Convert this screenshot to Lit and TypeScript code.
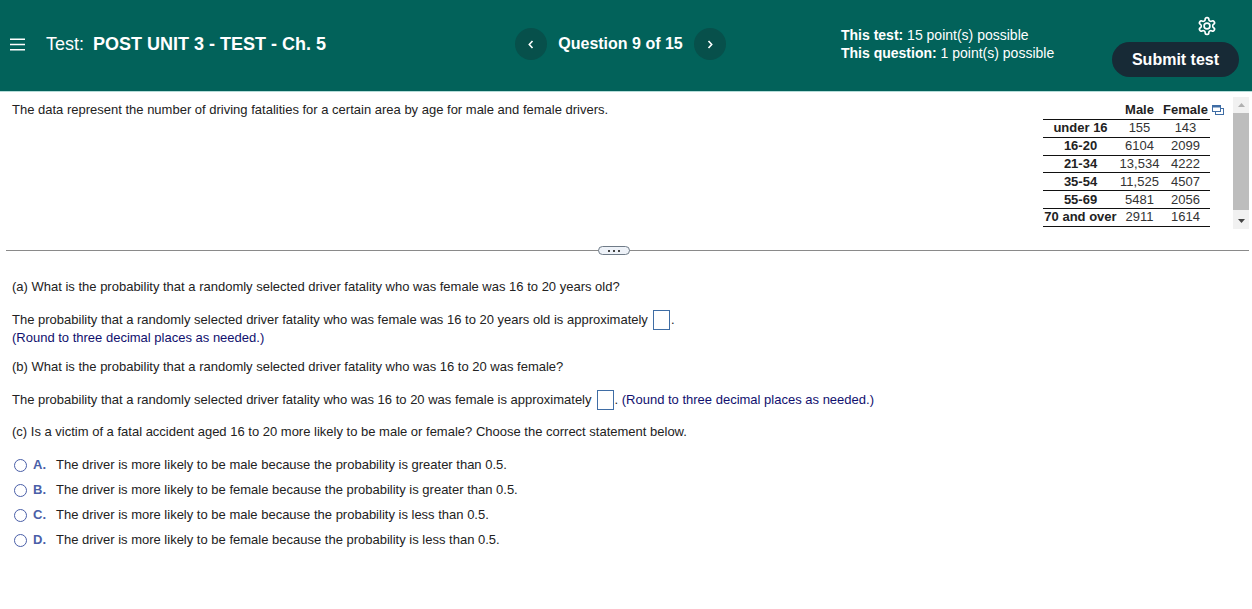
import { LitElement, html, css } from 'lit';
import { customElement } from 'lit/decorators.js';

const ROWS = [
  ['under 16', '155', '143'],
  ['16-20', '6104', '2099'],
  ['21-34', '13,534', '4222'],
  ['35-54', '11,525', '4507'],
  ['55-69', '5481', '2056'],
  ['70 and over', '2911', '1614'],
];

const OPTIONS = [
  ['A.', 'The driver is more likely to be male because the probability is greater than 0.5.'],
  ['B.', 'The driver is more likely to be female because the probability is greater than 0.5.'],
  ['C.', 'The driver is more likely to be male because the probability is less than 0.5.'],
  ['D.', 'The driver is more likely to be female because the probability is less than 0.5.'],
];

@customElement('app-root')
export class AppRoot extends LitElement {
  static styles = css`
    :host {
      display: block;
      height: 609px;
      overflow: hidden;
      background: #fff;
      font-family: 'Liberation Sans', Arial, sans-serif;
      font-size: 13px;
      color: #222;
    }

    /* header */
    .header {
      height: 92px;
      box-sizing: border-box;
      background: #02625a;
      border-bottom: 1px solid #b5dcd8;
      color: #fff;
      display: grid;
      grid-template-columns: 515px 326px 271px 1fr;
      align-items: center;
    }
    .title {
      display: flex;
      align-items: center;
      padding-left: 10px;
      margin-top: -3px;
      font-size: 18px;
    }
    .menu {
      width: 15px;
      height: 13px;
      margin-right: 21px;
      flex: none;
    }
    .title b {
      margin-left: 9px;
    }
    .nav {
      display: flex;
      align-items: center;
      margin-top: -3px;
      font-size: 16px;
      font-weight: bold;
    }
    .nav span {
      width: 125px;
      margin: 0 11px;
      text-align: center;
      white-space: nowrap;
    }
    .round {
      width: 32px;
      height: 32px;
      border-radius: 50%;
      background: #07504b;
      display: flex;
      align-items: center;
      justify-content: center;
    }
    .points {
      font-size: 14px;
      line-height: 18px;
      margin-top: -4px;
    }
    .actions {
      display: flex;
      flex-direction: column;
      align-items: flex-end;
      padding-right: 13px;
      margin-top: 2px;
    }
    .gear {
      width: 20px;
      height: 20px;
      margin: 0 22px 6px 0;
    }
    .submit {
      width: 127px;
      height: 35px;
      border: none;
      border-radius: 18px;
      background: #172a36;
      color: #fff;
      font: bold 16px 'Liberation Sans', Arial, sans-serif;
    }

    /* top pane */
    .top {
      height: 158px;
      box-sizing: border-box;
      display: flex;
      padding: 6px 3px 0 12px;
    }
    .intro {
      flex: 1;
      margin: 5px 0 0;
      line-height: 14px;
    }
    .data {
      display: flex;
      align-items: flex-start;
      margin: 4px 0 0;
    }
    table {
      width: 167px;
      table-layout: fixed;
      border-collapse: collapse;
      font-size: 13px;
      line-height: 14px;
    }
    th,
    td {
      height: 16.8px;
      padding: 0;
      text-align: center;
      white-space: nowrap;
    }
    td {
      color: #333;
    }
    thead th {
      height: 15px;
      padding-bottom: 2px;
      vertical-align: bottom;
      font-weight: bold;
    }
    tbody tr {
      border-top: 1px solid #111;
    }
    tbody tr:last-child {
      border-bottom: 1px solid #111;
    }
    tbody th {
      font-weight: bold;
    }
    .col-age {
      width: 75px;
    }
    .col-male {
      width: 43px;
    }
    .copy {
      width: 12px;
      height: 10px;
      margin: 3px 9px 0 2px;
      flex: none;
    }
    .scroll {
      width: 16px;
      height: 132px;
      margin-top: -5px;
      background: #f1f1f1;
      display: flex;
      flex-direction: column;
      align-items: center;
      flex: none;
    }
    .thumb {
      width: 100%;
      height: 97px;
      background: #bdbdbd;
    }
    .arrow {
      width: 7px;
      height: 4px;
      margin: 6px 0;
    }
    .arrow.down {
      margin-top: auto;
    }

    /* divider */
    .divider {
      height: 1px;
      margin: 0 3px 0 6px;
      background: #8a8a8a;
      position: relative;
    }
    .grip {
      position: absolute;
      left: 592px;
      top: -4px;
      width: 30px;
      height: 7px;
      border: 1px solid #6f7b87;
      border-radius: 5px;
      background: #eef2f8;
      display: flex;
      align-items: center;
      justify-content: center;
      gap: 3px;
    }
    .grip i {
      width: 2px;
      height: 2px;
      background: #444;
    }

    /* questions */
    .body {
      padding: 29px 12px 0;
      line-height: 14px;
    }
    .body p {
      margin: 0;
    }
    .hint {
      color: #10106e;
    }
    .answer-line {
      display: flex;
      align-items: center;
      height: 18px;
      white-space: pre;
    }
    .box {
      width: 17px;
      height: 20px;
      border: 1px solid #3f6da5;
      margin: 0 1px 0 5px;
      box-sizing: border-box;
    }
    .options {
      margin-top: 19px;
      display: flex;
      flex-direction: column;
      gap: 11px;
    }
    .option {
      display: flex;
      align-items: center;
      height: 14px;
      padding-left: 2px;
    }
    .radio {
      width: 13px;
      height: 13px;
      box-sizing: border-box;
      border: 1.3px solid #4a5fa8;
      border-radius: 50%;
      margin-right: 6px;
    }
    .letter {
      width: 23px;
      font-weight: bold;
      color: #4a5fa8;
    }
  `;

  render() {
    return html`
      <div class="header">
        <div class="title">
          <svg class="menu" viewBox="0 0 15 13" fill="none" stroke="#fff" stroke-width="1.4">
            <path d="M0 1.2h15M0 6.5h15M0 11.8h15" />
          </svg>
          Test: <b>POST UNIT 3 - TEST - Ch. 5</b>
        </div>
        <div class="nav">
          <div class="round">
            <svg width="6" height="9" viewBox="0 0 6 9" fill="none" stroke="#fff" stroke-width="1.6">
              <path d="M4.5 1 1.3 4.5l3.2 3.5" />
            </svg>
          </div>
          <span>Question 9 of 15</span>
          <div class="round">
            <svg width="6" height="9" viewBox="0 0 6 9" fill="none" stroke="#fff" stroke-width="1.6">
              <path d="M1.5 1l3.2 3.5L1.5 8" />
            </svg>
          </div>
        </div>
        <div class="points">
          <div><b>This test:</b> 15 point(s) possible</div>
          <div><b>This question:</b> 1 point(s) possible</div>
        </div>
        <div class="actions">
          <svg class="gear" viewBox="0 0 24 24" fill="none" stroke="#fff" stroke-width="2" stroke-linecap="round" stroke-linejoin="round">
            <path d="M12.22 2h-.44a2 2 0 0 0-2 2v.18a2 2 0 0 1-1 1.73l-.43.25a2 2 0 0 1-2 0l-.15-.08a2 2 0 0 0-2.73.73l-.22.38a2 2 0 0 0 .73 2.73l.15.1a2 2 0 0 1 1 1.72v.51a2 2 0 0 1-1 1.74l-.15.09a2 2 0 0 0-.73 2.73l.22.38a2 2 0 0 0 2.73.73l.15-.08a2 2 0 0 1 2 0l.43.25a2 2 0 0 1 1 1.73V20a2 2 0 0 0 2 2h.44a2 2 0 0 0 2-2v-.18a2 2 0 0 1 1-1.73l.43-.25a2 2 0 0 1 2 0l.15.08a2 2 0 0 0 2.73-.73l.22-.39a2 2 0 0 0-.73-2.73l-.15-.08a2 2 0 0 1-1-1.74v-.5a2 2 0 0 1 1-1.74l.15-.09a2 2 0 0 0 .73-2.73l-.22-.38a2 2 0 0 0-2.73-.73l-.15.08a2 2 0 0 1-2 0l-.43-.25a2 2 0 0 1-1-1.73V4a2 2 0 0 0-2-2z" />
            <circle cx="12" cy="12" r="3.5" />
          </svg>
          <button class="submit">Submit test</button>
        </div>
      </div>

      <div class="top">
        <p class="intro">
          The data represent the number of driving fatalities for a certain area by age for male and female drivers.
        </p>
        <div class="data">
          <table>
            <colgroup>
              <col class="col-age" />
              <col class="col-male" />
              <col />
            </colgroup>
            <thead>
              <tr><th></th><th>Male</th><th>Female</th></tr>
            </thead>
            <tbody>
              ${ROWS.map(
                (r) => html`<tr><th>${r[0]}</th><td>${r[1]}</td><td>${r[2]}</td></tr>`
              )}
            </tbody>
          </table>
          <svg class="copy" viewBox="0 0 12 10" fill="#fff" stroke="#3f6da5" stroke-width="1">
            <rect x="3.5" y="3.5" width="8" height="6" />
            <rect x="0.5" y="0.5" width="8" height="6" />
            <path d="M0.5 1.5h8" stroke-width="2" />
          </svg>
          <div class="scroll">
            <svg class="arrow" viewBox="0 0 7 4" fill="#b0b0b0"><path d="M3.5 0 7 4H0z" /></svg>
            <div class="thumb"></div>
            <svg class="arrow down" viewBox="0 0 7 4" fill="#444"><path d="M0 0h7L3.5 4z" /></svg>
          </div>
        </div>
      </div>

      <div class="divider">
        <div class="grip"><i></i><i></i><i></i></div>
      </div>

      <div class="body">
        <p>(a) What is the probability that a randomly selected driver fatality who was female was 16 to 20 years old?</p>
        <div class="answer-line" style="margin-top:17px">The probability that a randomly selected driver fatality who was female was 16 to 20 years old is approximately<span class="box"></span>.</div>
        <p class="hint" style="margin-top:2px">(Round to three decimal places as needed.)</p>
        <p style="margin-top:15px">(b) What is the probability that a randomly selected driver fatality who was 16 to 20 was female?</p>
        <div class="answer-line" style="margin-top:17px">The probability that a randomly selected driver fatality who was 16 to 20 was female is approximately<span class="box"></span>. <span class="hint">(Round to three decimal places as needed.)</span></div>
        <p style="margin-top:16px">(c) Is a victim of a fatal accident aged 16 to 20 more likely to be male or female? Choose the correct statement below.</p>
        <div class="options">
          ${OPTIONS.map(
            (o) => html`<div class="option">
              <span class="radio"></span><span class="letter">${o[0]}</span><span>${o[1]}</span>
            </div>`
          )}
        </div>
      </div>
    `;
  }
}
